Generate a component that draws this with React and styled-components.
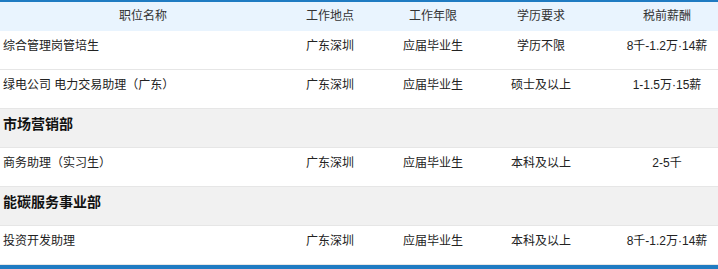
import React from "react";
import styled, { createGlobalStyle } from "styled-components";

const GlobalStyle = createGlobalStyle`
  body {
    margin: 0;
    background: #ffffff;
    font-family: "Liberation Sans", "Noto Sans CJK SC", sans-serif;
    overflow: hidden;
  }
`;

const Table = styled.div`
  width: 718px;
  border-top: 2px solid #1f7bc2;
  border-bottom: 4px solid #1f7bc2;
  color: #222;
`;

const Row = styled.div`
  display: grid;
  grid-template-columns: 286px 88px 118px 98px 128px;
  height: ${(p) => (p.$head ? "28px" : "38px")};
  background: ${(p) => (p.$head ? "#e9f4fe" : "#ffffff")};
  border-bottom: 1px solid ${(p) => (p.$head ? "#e9f4fe" : "#e6e6e6")};
  font-size: 12px;
  line-height: ${(p) => (p.$head ? "28px" : "16px")};
`;

const Cell = styled.div`
  text-align: ${(p) => (p.$left ? "left" : "center")};
  padding: ${(p) => (p.$head ? "0" : "7px 0 0")};
  padding-left: ${(p) => (p.$left ? "3px" : p.$shift ? "26px" : "0")};
  color: ${(p) => (p.$head ? "#333" : "#222")};
  white-space: nowrap;
`;

const Section = styled.div`
  box-sizing: border-box;
  height: 39px;
  background: #f1f1f1;
  border-bottom: 1px solid #e6e6e6;
  padding: 6px 3px 0;
  font-size: 14px;
  font-weight: bold;
  line-height: 18px;
  color: #111;
`;

const columns = ["职位名称", "工作地点", "工作年限", "学历要求", "税前薪酬"];

const items = [
  { name: "综合管理岗管培生", place: "广东深圳", years: "应届毕业生", edu: "学历不限", pay: "8千-1.2万·14薪" },
  { name: "绿电公司 电力交易助理（广东）", place: "广东深圳", years: "应届毕业生", edu: "硕士及以上", pay: "1-1.5万·15薪" },
  { section: "市场营销部" },
  { name: "商务助理（实习生）", place: "广东深圳", years: "应届毕业生", edu: "本科及以上", pay: "2-5千" },
  { section: "能碳服务事业部" },
  { name: "投资开发助理", place: "广东深圳", years: "应届毕业生", edu: "本科及以上", pay: "8千-1.2万·14薪" },
];

export default function App() {
  return (
    <>
      <GlobalStyle />
      <Table>
        <Row $head>
          {columns.map((c, i) => (
            <Cell key={c} $head $shift={i === 4}>
              {c}
            </Cell>
          ))}
        </Row>
        {items.map((it, i) =>
          it.section ? (
            <Section key={i}>{it.section}</Section>
          ) : (
            <Row key={i}>
              <Cell $left>{it.name}</Cell>
              <Cell>{it.place}</Cell>
              <Cell>{it.years}</Cell>
              <Cell>{it.edu}</Cell>
              <Cell $shift>{it.pay}</Cell>
            </Row>
          )
        )}
      </Table>
    </>
  );
}
